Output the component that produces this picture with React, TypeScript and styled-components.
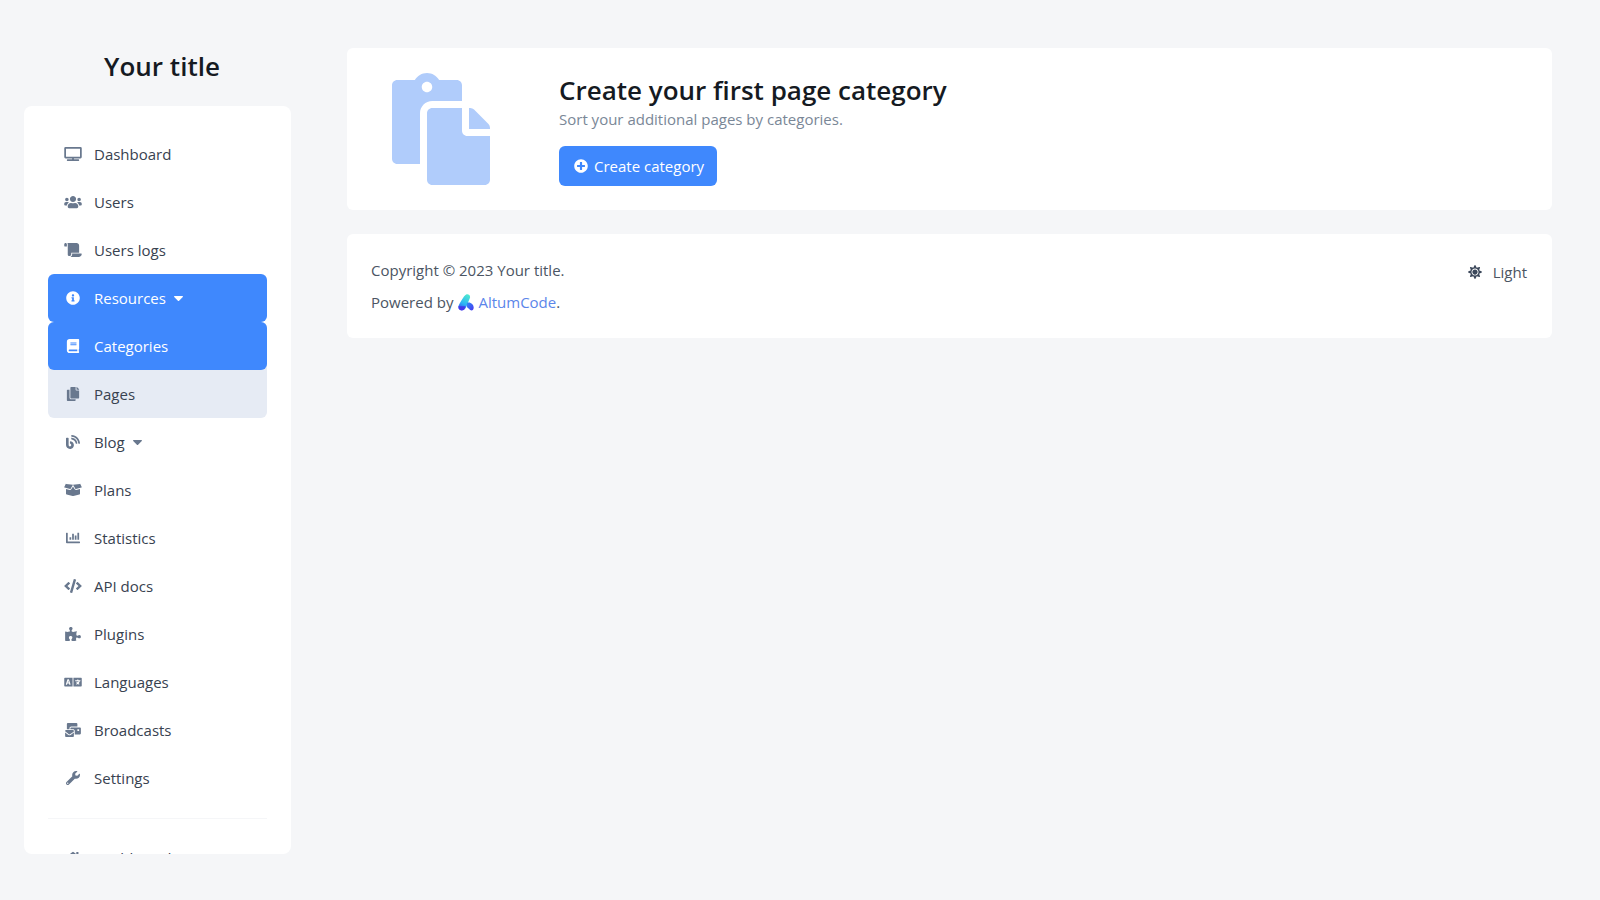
import React from "react";
import styled, { createGlobalStyle } from "styled-components";
import {
  FaTv, FaUsers, FaScroll, FaInfoCircle, FaBook, FaCopy, FaBlog, FaBoxOpen, FaChartBar, FaCode,
  FaPuzzlePiece, FaLanguage, FaMailBulk, FaWrench, FaPaste, FaPlusCircle, FaSun, FaHome,
} from "react-icons/fa";
import type { IconType } from "react-icons";

const GlobalStyle = createGlobalStyle`
  *, *::before, *::after { box-sizing: border-box; }
  body {
    margin: 0;
    background: #f5f6f8;
    color: #4b5563;
    font-family: "Segoe UI", "Open Sans", "Noto Sans", sans-serif;
    font-size: 15px;
    line-height: 24px;
  }
`;

const Page = styled.div`
  display: flex;
  min-height: 100vh;
`;

const Sidebar = styled.aside`
  flex: 0 0 300px;
  height: 100vh;
  padding: 0 0 46px 24px;
  display: flex;
  flex-direction: column;
`;

const Brand = styled.a`
  display: block;
  padding: 48px 0 22px;
  color: #151a22;
  font-size: 26px;
  font-weight: 600;
  line-height: 36px;
  text-align: center;
  text-decoration: none;
`;

const NavCard = styled.nav`
  flex: 1;
  min-height: 0;
  margin-right: 9px;
  padding: 24px;
  overflow: hidden;
  background: #fff;
  border-radius: 8px;
`;

const NavList = styled.ul`
  margin: 0;
  padding: 0;
  list-style: none;
`;

const SubList = styled(NavList)`
  background: #e6ebf4;
  border-radius: 6px;
`;

const NavLink = styled.a<{ $active?: boolean }>`
  display: flex;
  align-items: center;
  height: 48px;
  padding: 0 16px;
  border-radius: 6px;
  background: ${(p) => (p.$active ? "#3f88fd" : "transparent")};
  color: ${(p) => (p.$active ? "#fff" : "#384250")};
  text-decoration: none;
`;

const NavIcon = styled.span<{ $active?: boolean }>`
  display: flex;
  margin-right: 12px;
  color: ${(p) => (p.$active ? "#fff" : "#69788e")};
  svg { width: 18px; height: 14px; }
`;

const Caret = styled.svg<{ $active?: boolean }>`
  margin-left: 8px;
  fill: ${(p) => (p.$active ? "#fff" : "#69788e")};
`;

const Divider = styled.hr`
  margin: 16px 0 15px;
  border: 0;
  border-top: 1px solid #f5f6f8;
`;

const Main = styled.main`
  flex: 1;
  min-width: 0;
  padding: 48px 48px 48px 47px;
`;

const Card = styled.section`
  display: flex;
  align-items: center;
  padding: 24px;
  background: #fff;
  border-radius: 6px;
`;

const Artwork = styled.div`
  flex: 0 0 188px;
  padding-left: 14px;
  color: #b0ccfb;
  font-size: 112px;
  line-height: 0;
`;

const Heading = styled.h1`
  margin: 0;
  color: #151a22;
  font-size: 26px;
  font-weight: 600;
  line-height: 36px;
`;

const Muted = styled.p`
  margin: 0 0 16px;
  color: #7a8797;
  line-height: 22px;
`;

const PrimaryButton = styled.button`
  display: flex;
  align-items: center;
  gap: 6px;
  height: 40px;
  padding: 0 13px 0 15px;
  border: 0;
  border-radius: 6px;
  background: #3f88fd;
  color: #fff;
  font: inherit;
  cursor: pointer;
`;

const Footer = styled.footer`
  display: flex;
  justify-content: space-between;
  align-items: flex-start;
  margin-top: 24px;
  padding: 24px;
  background: #fff;
  border-radius: 6px;
`;

const FooterLine = styled.p`
  display: flex;
  align-items: center;
  margin: 0 0 8px;
  &:last-child { margin: 0; }
`;

const FooterLink = styled.a`
  display: flex;
  align-items: center;
  gap: 4px;
  margin-left: 5px;
  color: #5b86ea;
  text-decoration: none;
`;

const ThemeButton = styled.button`
  display: flex;
  align-items: center;
  gap: 11px;
  padding: 2px 1px;
  border: 0;
  background: none;
  color: #4b5563;
  font: inherit;
  cursor: pointer;
  svg { font-size: 14px; color: #3b475a; }
`;

type ItemProps = { icon: IconType; label: string; active?: boolean; caret?: boolean; children?: React.ReactNode };

function Item({ icon: Icon, label, active, caret, children }: ItemProps) {
  return (
    <li>
      <NavLink href="#" $active={active}>
        <NavIcon $active={active}><Icon /></NavIcon>
        {label}
        {caret && (
          <Caret $active={active} width="9" height="5" viewBox="0 0 9 5" aria-hidden="true">
            <path d="M.6 0h7.800c.5 0 .8.6.4 1L5.100 4.700a.8.8 0 0 1-1.200 0L.2 1C-.2.600.100 0 .6 0Z" />
          </Caret>
        )}
      </NavLink>
      {children}
    </li>
  );
}

function AltumLogo() {
  return (
    <svg width="16" height="17" viewBox="0 0 16 17" aria-hidden="true">
      <defs>
        <linearGradient id="stem" x1="0.7" y1="0" x2="0.3" y2="1">
          <stop offset="0" stopColor="#4de8d0" />
          <stop offset="0.6" stopColor="#2cb4f5" />
          <stop offset="1" stopColor="#3a4df0" />
        </linearGradient>
        <linearGradient id="foot" x1="0" y1="0" x2="1" y2="1">
          <stop offset="0" stopColor="#2f8df8" />
          <stop offset="1" stopColor="#4a35ee" />
        </linearGradient>
      </defs>
      <path d="M8.2 .6c2-.9 4.400.8 3.800 3.200L8 13.500C6.800 16.800.2 17.600.4 12.800.5 11.200 5.800 1.600 8.200.6Z" fill="url(#stem)" />
      <path d="M9.600 8.600c3-.8 6 1.800 6.100 4.900 0 3.800-3.400 3.600-4.600 1.300-2.400-.4-3.200-4.600-1.500-6.200Z" fill="url(#foot)" />
      <path d="M.4 12.300h7.200l-1.400 3.300c-1.800 1.800-6 1.300-5.800-3.300Z" fill="#4437ea" />
    </svg>
  );
}

export default function App() {
  return (
    <Page>
      <GlobalStyle />
      <Sidebar>
        <Brand href="#">Your title</Brand>
        <NavCard>
          <NavList>
            <Item icon={FaTv} label="Dashboard" />
            <Item icon={FaUsers} label="Users" />
            <Item icon={FaScroll} label="Users logs" />
            <Item icon={FaInfoCircle} label="Resources" active caret>
              <SubList>
                <Item icon={FaBook} label="Categories" active />
                <Item icon={FaCopy} label="Pages" />
              </SubList>
            </Item>
            <Item icon={FaBlog} label="Blog" caret />
            <Item icon={FaBoxOpen} label="Plans" />
            <Item icon={FaChartBar} label="Statistics" />
            <Item icon={FaCode} label="API docs" />
            <Item icon={FaPuzzlePiece} label="Plugins" />
            <Item icon={FaLanguage} label="Languages" />
            <Item icon={FaMailBulk} label="Broadcasts" />
            <Item icon={FaWrench} label="Settings" />
          </NavList>
          <Divider />
          <NavList>
            <Item icon={FaHome} label="Dashboard" />
          </NavList>
        </NavCard>
      </Sidebar>
      <Main>
        <Card>
          <Artwork><FaPaste /></Artwork>
          <div>
            <Heading>Create your first page category</Heading>
            <Muted>Sort your additional pages by categories.</Muted>
            <PrimaryButton type="button"><FaPlusCircle size={14} />Create category</PrimaryButton>
          </div>
        </Card>
        <Footer>
          <div>
            <FooterLine>Copyright © 2023 Your title.</FooterLine>
            <FooterLine>
              Powered by<FooterLink href="#"><AltumLogo />AltumCode</FooterLink>.
            </FooterLine>
          </div>
          <ThemeButton type="button"><FaSun />Light</ThemeButton>
        </Footer>
      </Main>
    </Page>
  );
}
